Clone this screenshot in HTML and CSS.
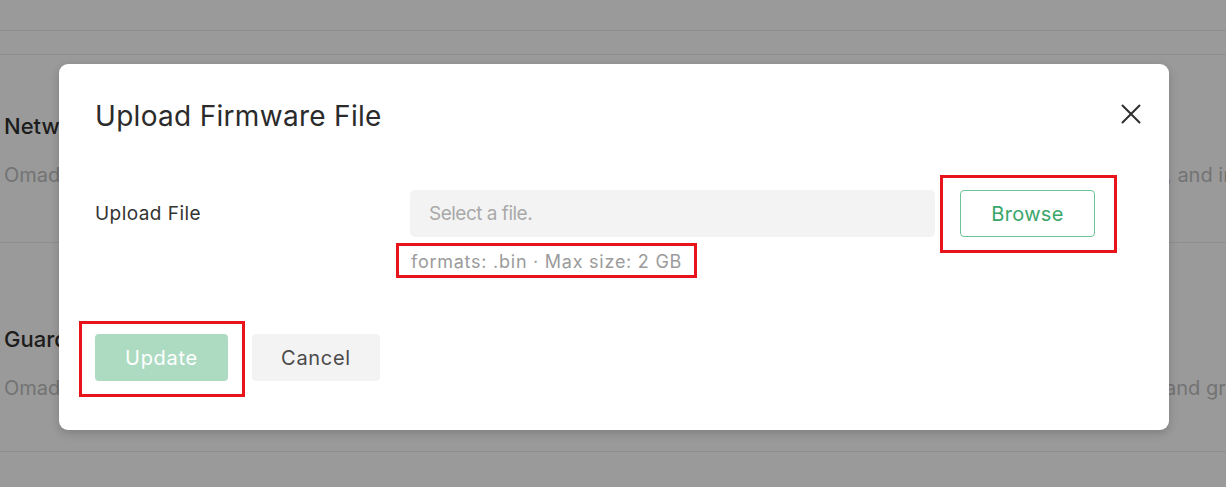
FILE: index.html
```html
<!DOCTYPE html>
<html lang="en">
<head>
<meta charset="utf-8">
<title>Upload Firmware File</title>
<link rel="stylesheet" href="styles.css">
</head>
<body>
<div class="page">
  <div class="bar bar-top"></div>
  <div class="bar bar-tabs"></div>
  <section class="section section-first">
    <h2 class="section-title">Network Controller</h2>
    <p class="section-desc"><span class="desc-left">Omada Network Controller centrally manages gateways, switches and access points</span><span class="desc-right">, and integrates them into one</span></p>
  </section>
  <section class="section section-second">
    <h2 class="section-title">Guard Service</h2>
    <p class="section-desc"><span class="desc-left">Omada Guard keeps your devices protected with updated firmware, security p</span><span class="desc-right"> and granular</span></p>
  </section>
</div>

<div class="modal" role="dialog" aria-labelledby="dlg-title">
  <div class="modal-header">
    <h1 class="modal-title" id="dlg-title">Upload Firmware File</h1>
    <button class="close-btn" aria-label="Close">
      <svg width="20" height="20" viewBox="0 0 20 20" aria-hidden="true">
        <path d="M1.5 1.5 L18.5 18.5 M18.5 1.5 L1.5 18.5" stroke="#2e2e2e" stroke-width="2" stroke-linecap="round" fill="none"/>
      </svg>
    </button>
  </div>
  <div class="form-row">
    <label class="form-label">Upload File</label>
    <div class="file-input">Select a file.</div>
    <button class="btn btn-browse annotated">Browse</button>
  </div>
  <div class="hint-row">
    <span class="hint annotated">formats: .bin · Max size: 2 GB</span>
  </div>
  <div class="modal-footer">
    <button class="btn btn-update annotated">Update</button>
    <button class="btn btn-cancel">Cancel</button>
  </div>
</div>
</body>
</html>
```

FILE: styles.css
```css
* { box-sizing: border-box; }
html, body { margin: 0; padding: 0; }
body {
  width: 1226px;
  height: 487px;
  overflow: hidden;
  background: #9a9a9a;
  font-family: Inter, "Noto Sans", "Liberation Sans", sans-serif;
  position: relative;
}
.page { width: 100%; }
.bar { border-bottom: 1px solid #8e8e8e; }
.bar-top { height: 31px; }
.bar-tabs { height: 24px; }
.section {
  border-bottom: 1px solid #8e8e8e;
  padding-left: 4px;
  overflow: hidden;
}
.section-first { height: 188px; padding-top: 57px; }
.section-second { height: 209px; padding-top: 82px; }
.section-title {
  margin: 0;
  font-size: 22px;
  line-height: 28px;
  font-weight: 500;
  color: #1c1c1c;
  white-space: nowrap;
}
.section-desc {
  margin: 22px 0 0;
  font-size: 20px;
  line-height: 26px;
  color: #737373;
  white-space: nowrap;
  display: flex;
}
.desc-left { flex: 0 0 1162px; overflow: hidden; }
.desc-right { flex: 0 0 auto; }
.section-second .desc-left { flex-basis: 1161px; }

.modal {
  position: absolute;
  left: 59px;
  top: 64px;
  width: 1110px;
  height: 366px;
  background: #fff;
  border-radius: 9px;
  box-shadow: 0 3px 10px rgba(0,0,0,0.18);
  padding: 34px 28px 0 36px;
}
.modal-header {
  display: flex;
  align-items: center;
  justify-content: space-between;
  height: 36px;
}
.modal-title {
  margin: 0;
  font-size: 28px;
  line-height: 36px;
  font-weight: 400;
  color: #2b2b2b;
  letter-spacing: 0.3px;
}
.close-btn {
  border: 0;
  background: none;
  padding: 0;
  width: 20px;
  height: 20px;
  margin-bottom: 4px;
  display: flex;
}
.form-row {
  display: flex;
  align-items: center;
  margin-top: 56px;
  height: 47px;
}
.form-label {
  width: 315px;
  font-size: 19px;
  color: #333;
  letter-spacing: 0.45px;
}
.file-input {
  width: 525px;
  height: 47px;
  background: #f3f3f3;
  border-radius: 5px;
  padding-left: 19px;
  display: flex;
  align-items: center;
  font-size: 19px;
  color: #a9a9a9;
  letter-spacing: -0.5px;
}
.btn {
  font-family: inherit;
  font-size: 20px;
  height: 47px;
  border-radius: 4px;
  cursor: pointer;
  letter-spacing: 0.7px;
}
.btn-browse {
  margin-left: 25px;
  width: 135px;
  background: #fff;
  border: 1.5px solid #6cc396;
  color: #3aa66c;
  letter-spacing: 0.3px;
}
.hint-row {
  margin-top: 14px;
  padding-left: 316px;
  height: 22px;
}
.hint {
  display: inline-block;
  font-size: 18px;
  line-height: 22px;
  color: #9b9b9b;
  letter-spacing: 0.75px;
}
.modal-footer {
  display: flex;
  gap: 24px;
  margin-top: 61px;
}
.btn-update {
  width: 133px;
  border: 0;
  background: #acdbc2;
  color: #fff;
}
.btn-cancel {
  width: 128px;
  border: 0;
  background: #f3f3f3;
  color: #4a4a4a;
}

/* red annotation frames drawn over the screenshot */
.annotated { position: relative; }
.annotated::after {
  content: "";
  position: absolute;
  border: 3px solid #e8141c;
  pointer-events: none;
}
.btn-browse::after { top: -16px; bottom: -17px; left: -21px; right: -23px; }
.btn-update::after { top: -13px; bottom: -16px; left: -16px; right: -17px; }
.hint::after { top: -8px; bottom: -5px; left: -15px; right: -15px; }
```
